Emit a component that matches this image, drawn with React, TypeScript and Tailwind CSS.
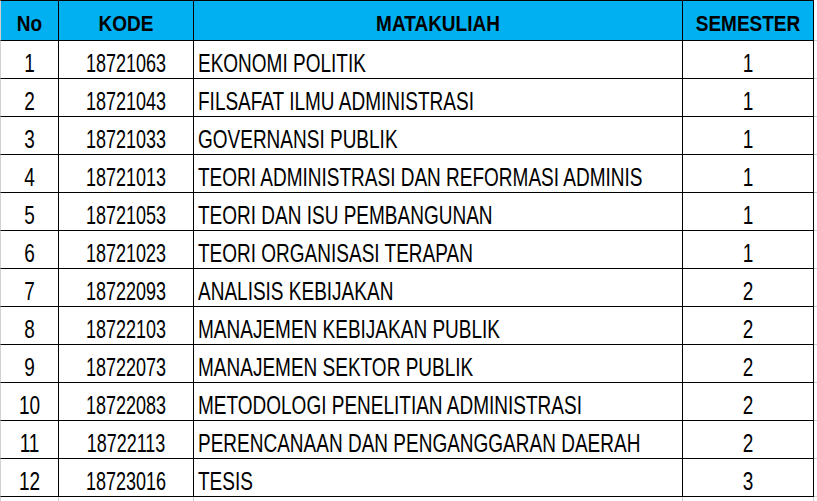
import React from 'react';

const rows = [
    { no: 1, kode: '18721063', nama: 'EKONOMI POLITIK', sem: 1 },
    { no: 2, kode: '18721043', nama: 'FILSAFAT ILMU ADMINISTRASI', sem: 1 },
    { no: 3, kode: '18721033', nama: 'GOVERNANSI PUBLIK', sem: 1 },
    { no: 4, kode: '18721013', nama: 'TEORI ADMINISTRASI DAN REFORMASI ADMINIS', sem: 1 },
    { no: 5, kode: '18721053', nama: 'TEORI DAN ISU PEMBANGUNAN', sem: 1 },
    { no: 6, kode: '18721023', nama: 'TEORI ORGANISASI TERAPAN', sem: 1 },
    { no: 7, kode: '18722093', nama: 'ANALISIS KEBIJAKAN', sem: 2 },
    { no: 8, kode: '18722103', nama: 'MANAJEMEN KEBIJAKAN PUBLIK', sem: 2 },
    { no: 9, kode: '18722073', nama: 'MANAJEMEN SEKTOR PUBLIK', sem: 2 },
    { no: 10, kode: '18722083', nama: 'METODOLOGI PENELITIAN ADMINISTRASI', sem: 2 },
    { no: 11, kode: '18722113', nama: 'PERENCANAAN DAN PENGANGGARAN DAERAH', sem: 2 },
    { no: 12, kode: '18723016', nama: 'TESIS', sem: 3 },
];

function HeadCell({ label, first = false }: { label: string; first?: boolean }) {
    return (
        <div
            className={`flex items-end justify-center pb-[6px] bg-[#00b0f0] border-t border-b border-r border-t-black border-b-black border-r-black ${
                first ? 'border-l border-l-[#d0d0d0]' : ''
            }`}
        >
            <span className="inline-block leading-none text-[19px] font-bold origin-bottom scale-y-[1.14] whitespace-nowrap">
                {label}
            </span>
        </div>
    );
}

function Cell({
    children,
    size = 'text-[19px]',
    scale = 'scale-y-[1.32]',
    align = 'justify-center',
    first = false,
}: {
    children: React.ReactNode;
    size?: string;
    scale?: string;
    align?: string;
    first?: boolean;
}) {
    return (
        <div
            className={`flex items-end ${align} pb-[2px] border-b border-r border-black overflow-hidden ${
                first ? 'border-l border-l-[#d0d0d0]' : ''
            }`}
        >
            <span className={`inline-block leading-none ${size} origin-bottom ${scale} whitespace-nowrap`}>
                {children}
            </span>
        </div>
    );
}

export default function App() {
    return (
        <div className="w-[817px] h-[501px] overflow-hidden bg-white text-black font-['Liberation_Sans',Arial,sans-serif]">
            <div className="grid grid-cols-[59px_135px_489px_131px_1fr] grid-rows-[41px_repeat(12,38px)_1fr] h-full">
                {/* Header */}
                <HeadCell label="No" first />
                <HeadCell label="KODE" />
                <HeadCell label="MATAKULIAH" />
                <HeadCell label="SEMESTER" />
                <div className="border-b border-[#d0d0d0]" />

                {/* Rows */}
                {rows.map((r) => (
                    <React.Fragment key={r.no}>
                        <Cell first>{r.no}</Cell>
                        <Cell size="text-[18px]" scale="scale-y-[1.4]">{r.kode}</Cell>
                        <Cell align="justify-start pl-[4px]">{r.nama}</Cell>
                        <Cell>{r.sem}</Cell>
                        <div className="border-b border-[#d0d0d0]" />
                    </React.Fragment>
                ))}

                {/* Spreadsheet gridlines below the table */}
                <div className="border-l border-r border-[#d0d0d0]" />
                <div className="border-r border-[#d0d0d0]" />
                <div className="border-r border-[#d0d0d0]" />
                <div className="border-r border-[#d0d0d0]" />
                <div />
            </div>
        </div>
    );
}
